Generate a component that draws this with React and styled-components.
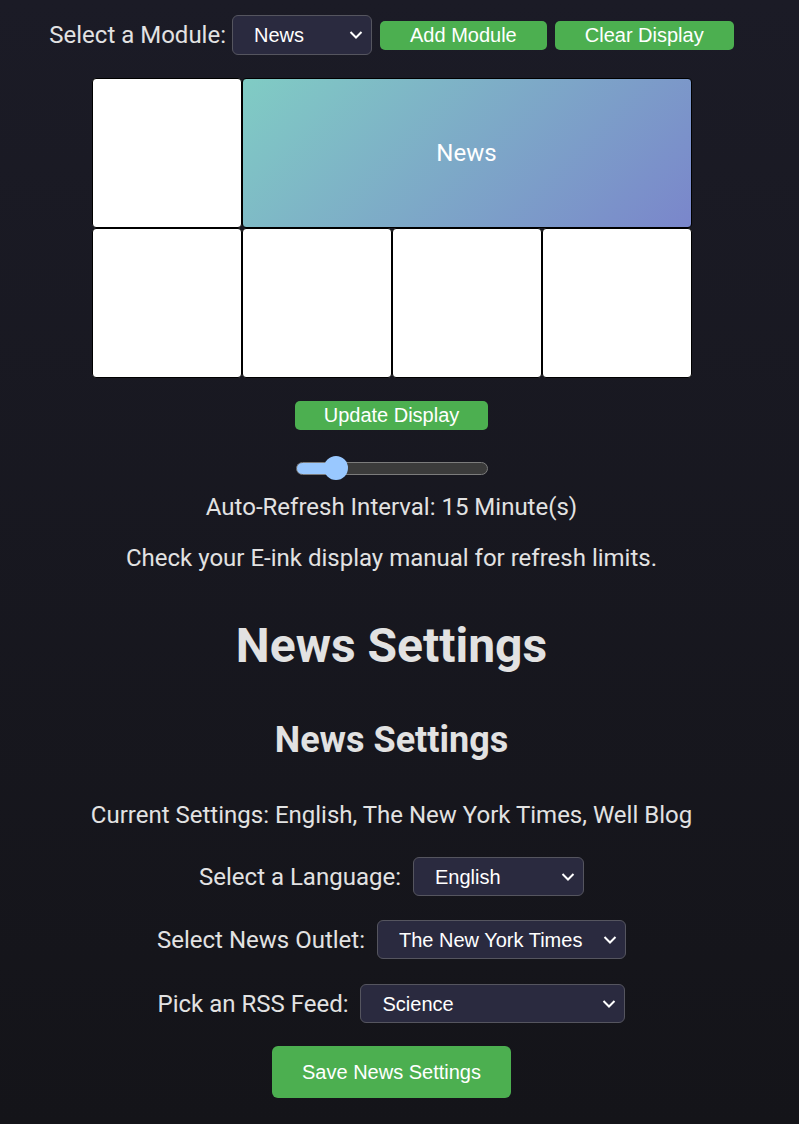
import React, { useState } from "react";
import styled, { createGlobalStyle } from "styled-components";

const GlobalStyle = createGlobalStyle`
  html, body {
    margin: 0;
    padding: 0;
  }
  body {
    background: linear-gradient(180deg, #1b1b26 0%, #141419 100%);
    min-height: 100vh;
    font-family: Roboto, "Liberation Sans", sans-serif;
    color: #e2e2e2;
  }
`;

const Page = styled.div`
  width: 783px;
  min-height: 1124px;
  display: flex;
  flex-direction: column;
  align-items: center;
  font-size: 24px;
`;

const TopBar = styled.div`
  display: flex;
  align-items: center;
  height: 40px;
  margin-top: 15px;
`;

const Label = styled.label`
  font-family: Roboto, sans-serif;
  font-size: 24px;
  color: #e2e2e2;
  margin-right: ${(p) => p.$gap || 12}px;
`;

const SelectWrap = styled.div`
  position: relative;
  display: inline-flex;
`;

const Select = styled.select`
  appearance: none;
  -webkit-appearance: none;
  box-sizing: border-box;
  width: ${(p) => p.$width}px;
  height: ${(p) => p.$height || 39}px;
  padding: 0 30px 0 21px;
  background: #2a2a3f;
  border: 1px solid #55555f;
  border-radius: 6px;
  color: #ffffff;
  font-family: "Liberation Sans", Arial, sans-serif;
  font-size: 20px;
  outline: none;
`;

const Chevron = styled.svg`
  position: absolute;
  right: 9px;
  top: 50%;
  transform: translateY(-50%);
  pointer-events: none;
`;

const Button = styled.button`
  box-sizing: border-box;
  height: ${(p) => p.$height || 29}px;
  padding: 0 ${(p) => p.$pad || 30}px;
  background: #4caf50;
  color: #ffffff;
  border: none;
  border-radius: ${(p) => p.$radius || 5}px;
  font-family: "Liberation Sans", Arial, sans-serif;
  font-size: 20px;
  cursor: pointer;
  margin-left: ${(p) => p.$left || 0}px;
  margin-top: ${(p) => p.$top || 0}px;
`;

const Grid = styled.div`
  display: grid;
  grid-template-columns: repeat(4, 150px);
  grid-template-rows: repeat(2, 150px);
  margin-top: 23px;
`;

const Cell = styled.div`
  box-sizing: border-box;
  border: 1px solid #000;
  border-radius: 4px;
  background: ${(p) =>
    p.$module ? "linear-gradient(135deg, #80ccc4 0%, #7a86cb 100%)" : "#ffffff"};
  grid-column: span ${(p) => p.$span || 1};
  display: flex;
  align-items: center;
  justify-content: center;
  color: #ffffff;
  font-size: 24px;
`;

const SliderRow = styled.div`
  height: 24px;
  margin-top: 26px;
  display: flex;
  align-items: center;
`;

const Range = styled.input`
  -webkit-appearance: none;
  appearance: none;
  box-sizing: border-box;
  width: 192px;
  height: 13px;
  margin: 0;
  border: 1px solid #7c7c7c;
  border-radius: 7px;
  outline: none;

  &::-webkit-slider-thumb {
    -webkit-appearance: none;
    width: 24px;
    height: 24px;
    border-radius: 50%;
    background: #99c8ff;
    border: none;
    cursor: pointer;
  }
`;

const Text = styled.p`
  margin: ${(p) => p.$top}px 0 0;
  font-size: 24px;
  line-height: 28px;
  color: #e2e2e2;
  text-align: center;
`;

const Title = styled.h1`
  margin: 46px 0 0;
  font-size: 48px;
  line-height: 56px;
  font-weight: 700;
  color: #e2e2e2;
`;

const SubTitle = styled.h2`
  margin: 45px 0 0;
  font-size: 36px;
  line-height: 42px;
  font-weight: 700;
  color: #e2e2e2;
`;

const FormRow = styled.div`
  display: flex;
  align-items: center;
  margin-top: ${(p) => p.$top}px;
`;

const Dropdown = ({ width, height, value, options }) => (
  <SelectWrap>
    <Select $width={width} $height={height} defaultValue={value}>
      {options.map((o) => (
        <option key={o}>{o}</option>
      ))}
    </Select>
    <Chevron width="14" height="9" viewBox="0 0 14 9">
      <path d="M1.5 1.5 L7 7 L12.5 1.5" fill="none" stroke="#ffffff" strokeWidth="2" />
    </Chevron>
  </SelectWrap>
);

export default function App() {
  const [interval, setInterval] = useState(15);
  const min = 5;
  const max = 65;
  const pct = ((interval - min) / (max - min)) * 100;
  const fill = `calc(12px + ${pct / 100} * (100% - 24px))`;

  return (
    <Page>
      <GlobalStyle />
      <TopBar>
        <Label $gap={6}>Select a Module:</Label>
        <Dropdown width={140} height={40} value="News" options={["News", "Weather", "Calendar", "Quote"]} />
        <Button $left={8}>Add Module</Button>
        <Button $left={8}>Clear Display</Button>
      </TopBar>

      <Grid>
        <Cell />
        <Cell $module $span={3}>News</Cell>
        <Cell />
        <Cell />
        <Cell />
        <Cell />
      </Grid>

      <Button $top={23} $pad={29}>Update Display</Button>

      <SliderRow>
        <Range
          type="range"
          min={min}
          max={max}
          value={interval}
          onChange={(e) => setInterval(Number(e.target.value))}
          style={{
            background: `linear-gradient(to right, #99c8ff 0, #99c8ff ${fill}, #3b3b3b ${fill}, #3b3b3b 100%)`,
          }}
        />
      </SliderRow>

      <Text $top={13}>Auto-Refresh Interval: {interval} Minute(s)</Text>
      <Text $top={23}>Check your E-ink display manual for refresh limits.</Text>

      <Title>News Settings</Title>
      <SubTitle>News Settings</SubTitle>

      <Text $top={40}>Current Settings: English, The New York Times, Well Blog</Text>

      <FormRow $top={28}>
        <Label>Select a Language:</Label>
        <Dropdown width={171} value="English" options={["English", "Español", "Français"]} />
      </FormRow>
      <FormRow $top={24}>
        <Label>Select News Outlet:</Label>
        <Dropdown width={249} value="The New York Times" options={["The New York Times", "BBC News"]} />
      </FormRow>
      <FormRow $top={25}>
        <Label>Pick an RSS Feed:</Label>
        <Dropdown width={265} value="Science" options={["Science", "Well Blog", "Technology"]} />
      </FormRow>

      <Button $top={23} $height={52} $radius={6}>Save News Settings</Button>
    </Page>
  );
}
